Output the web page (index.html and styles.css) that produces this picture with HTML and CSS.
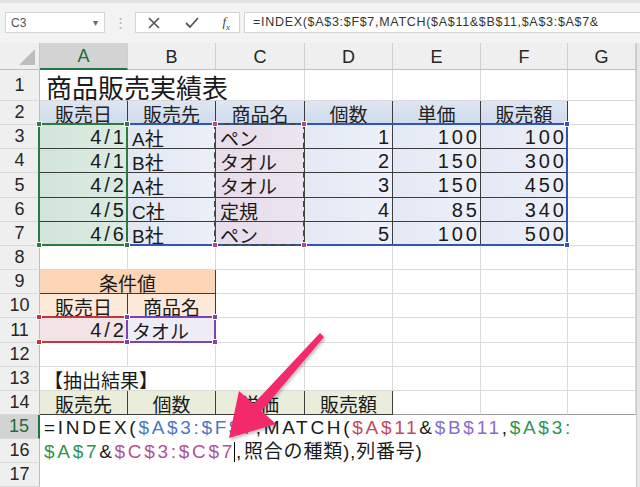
FILE: index.html
```html
<!DOCTYPE html>
<html lang="ja">
<head>
<meta charset="utf-8">
<title>商品販売実績表</title>
<link rel="stylesheet" href="styles.css">
</head>
<body>
<div class="toolbar">
  <div class="namebox"><span>C3</span><span class="caret">▾</span></div>
  <div class="dots">⋮</div>
  <div class="fxbox">
    <svg class="ico" width="14" height="14" viewBox="0 0 14 14"><path d="M2 2 L12 12 M12 2 L2 12" stroke="#555" stroke-width="1.6" fill="none"/></svg>
    <svg class="ico" width="16" height="14" viewBox="0 0 16 14"><path d="M2 7 L6 11 L14 2" stroke="#555" stroke-width="1.8" fill="none"/></svg>
    <span class="fx">f<sub>x</sub></span>
  </div>
  <div class="finput">=INDEX($A$3:$F$7,MATCH($A$11&amp;$B$11,$A$3:$A$7&amp;</div>
</div>

<div class="stage">
  <div class="sheet">
    <div class="scroll"></div>
    <!-- column headers -->
    <div class="corner"><svg width="18" height="18" viewBox="0 0 18 18"><path d="M17 1 L17 17 L1 17 Z" fill="#bdbdbd"/></svg></div>
    <div class="ch sel">A</div><div class="ch">B</div><div class="ch">C</div><div class="ch">D</div><div class="ch">E</div><div class="ch">F</div><div class="ch">G</div>

    <!-- row 1 -->
    <div class="rh">1</div>
    <div class="c title span3">商品販売実績表</div><div class="c"></div><div class="c"></div><div class="c"></div><div class="c"></div>

    <!-- row 2 -->
    <div class="rh">2</div>
    <div class="c t hd ctr">販売日</div><div class="c t hd ctr">販売先</div><div class="c t hd ctr">商品名</div><div class="c t hd ctr">個数</div><div class="c t hd ctr">単価</div><div class="c t hd ctr">販売額</div><div class="c"></div>

    <!-- rows 3-7 -->
    <div class="rh">3</div>
    <div class="c t ga num">4/1</div><div class="c t gb">A社</div><div class="c t gc">ペン</div><div class="c t gd num">1</div><div class="c t gd num">100</div><div class="c t gd num">100</div><div class="c"></div>
    <div class="rh">4</div>
    <div class="c t ga num">4/1</div><div class="c t gb">B社</div><div class="c t gc">タオル</div><div class="c t gd num">2</div><div class="c t gd num">150</div><div class="c t gd num">300</div><div class="c"></div>
    <div class="rh">5</div>
    <div class="c t ga num">4/2</div><div class="c t gb">A社</div><div class="c t gc">タオル</div><div class="c t gd num">3</div><div class="c t gd num">150</div><div class="c t gd num">450</div><div class="c"></div>
    <div class="rh">6</div>
    <div class="c t ga num">4/5</div><div class="c t gb">C社</div><div class="c t gc">定規</div><div class="c t gd num">4</div><div class="c t gd num">85</div><div class="c t gd num">340</div><div class="c"></div>
    <div class="rh">7</div>
    <div class="c t ga num">4/6</div><div class="c t gb">B社</div><div class="c t gc">ペン</div><div class="c t gd num">5</div><div class="c t gd num">100</div><div class="c t gd num">500</div><div class="c"></div>

    <!-- row 8 -->
    <div class="rh">8</div>
    <div class="c"></div><div class="c"></div><div class="c"></div><div class="c"></div><div class="c"></div><div class="c"></div><div class="c"></div>

    <!-- row 9 -->
    <div class="rh">9</div>
    <div class="c t or ctr span2">条件値</div><div class="c"></div><div class="c"></div><div class="c"></div><div class="c"></div><div class="c"></div>

    <!-- row 10 -->
    <div class="rh">10</div>
    <div class="c t or2 ctr">販売日</div><div class="c t or2 ctr">商品名</div><div class="c"></div><div class="c"></div><div class="c"></div><div class="c"></div><div class="c"></div>

    <!-- row 11 -->
    <div class="rh">11</div>
    <div class="c t pk num">4/2</div><div class="c t lv">タオル</div><div class="c"></div><div class="c"></div><div class="c"></div><div class="c"></div><div class="c"></div>

    <!-- row 12 -->
    <div class="rh">12</div>
    <div class="c"></div><div class="c"></div><div class="c"></div><div class="c"></div><div class="c"></div><div class="c"></div><div class="c"></div>

    <!-- row 13 -->
    <div class="rh">13</div>
    <div class="c span2 sub">【抽出結果】</div><div class="c"></div><div class="c"></div><div class="c"></div><div class="c"></div><div class="c"></div>

    <!-- row 14 -->
    <div class="rh">14</div>
    <div class="c t gr ctr">販売先</div><div class="c t gr ctr">個数</div><div class="c t gr ctr">単価</div><div class="c t gr ctr">販売額</div><div class="c r14"></div><div class="c r14"></div><div class="c r14"></div>

    <!-- rows 15-17 : cell in edit mode -->
    <div class="rh act">15</div>
    <div class="edit">=INDEX(<span class="fb">$A$3:$F$7</span>,MATCH(<span class="fr">$A$11</span>&amp;<span class="fp">$B$11</span>,<span class="fg">$A$3:</span><br><span class="fg">$A$7</span>&amp;<span class="fm">$C$3:$C$7</span><span class="cursor"></span>,<span class="jp">照合の種類),列番号)</span></div>
    <div class="rh">16</div>
    <div class="rh">17</div>
  </div>

  <div class="marks">
    <div class="box blue"><i class="h tr"></i><i class="h br"></i></div>
    <div class="box green"><i class="h tl"></i><i class="h tr"></i><i class="h bl"></i><i class="h br"></i></div>
    <div class="box dash"><i class="h tl"></i><i class="h tr"></i><i class="h bl"></i><i class="h br"></i></div>
    <div class="box red"><i class="h tl"></i><i class="h bl"></i></div>
    <div class="box purple"><i class="h tl"></i><i class="h tr"></i><i class="h bl"></i><i class="h br"></i></div>
  </div>

  <svg class="arrow" width="640" height="444" viewBox="0 0 640 444">
    <defs>
      <filter id="sh" x="-20%" y="-20%" width="140%" height="140%">
        <feDropShadow dx="1.5" dy="2" stdDeviation="1.5" flood-color="#000" flood-opacity="0.25"/>
      </filter>
    </defs>
    <g filter="url(#sh)" fill="#f2296c">
      <polygon points="324,294 320,290 253,361.5 261.5,368"/>
      <polygon points="229,395 239,348 276,381"/>
    </g>
  </svg>
</div>
</body>
</html>
```

FILE: styles.css
```css
* { box-sizing: border-box; }
html, body { margin: 0; padding: 0; }
body {
  width: 640px;
  height: 487px;
  overflow: hidden;
  background: #ffffff;
  font-family: "Liberation Sans", "Noto Sans CJK JP", sans-serif;
  color: #1a1a1a;
}

/* ---------- formula bar ---------- */
.toolbar {
  height: 43px;
  background: #f3f3f3;
  border-top: 3px solid #e3e3e3;
  display: flex;
  align-items: flex-start;
  padding: 9px 0 0 5px;
}
.namebox {
  width: 100px;
  height: 21px;
  background: #fff;
  border: 1px solid #d4d4d4;
  display: flex;
  align-items: center;
  justify-content: space-between;
  padding: 0 6px 0 5px;
  font-size: 12px;
  color: #555;
}
.caret { font-size: 10px; color: #666; }
.dots {
  width: 30px;
  height: 21px;
  display: flex;
  align-items: center;
  justify-content: center;
  color: #b0b0b0;
  font-size: 13px;
}
.fxbox {
  width: 105px;
  height: 21px;
  background: #fff;
  border: 1px solid #d4d4d4;
  display: flex;
  align-items: center;
  justify-content: space-between;
  padding: 0 9px 0 11px;
}
.fx {
  font-family: "Liberation Serif", serif;
  font-style: italic;
  font-size: 13px;
  color: #444;
}
.fx sub { font-size: 9px; }
.finput {
  flex: 1;
  height: 21px;
  margin-left: 4px;
  background: #fff;
  border: 1px solid #d4d4d4;
  border-right: none;
  padding-left: 8px;
  font-size: 12.5px;
  line-height: 19px;
  letter-spacing: 0.7px;
  color: #333;
  white-space: nowrap;
  overflow: hidden;
}

/* ---------- sheet ---------- */
.stage { display: grid; }
.stage > * { grid-area: 1 / 1; }

.sheet, .marks {
  display: grid;
  grid-template-columns: 40px 88px 88px 89px 88px 88px 87px 68px 4px;
  grid-template-rows: 27px 31px 24px 24px 24px 25px 24px 24px 24px 24px 24px 25px 24px 24px 24px 24px 24px 24px;
  width: 640px;
  height: 444px;
}
.marks { pointer-events: none; }

.scroll {
  grid-column: 9;
  grid-row: 1 / -1;
  background: #e6e6e6;
  border-left: 1px solid #c9c9c9;
}

.corner {
  background: #efefef;
  border-right: 1px solid #c6c6c6;
  border-bottom: 1px solid #bdbdbd;
  display: flex;
  align-items: flex-end;
  justify-content: flex-end;
  padding: 0 3px 3px 0;
}
.ch {
  background: #efefef;
  border-right: 1px solid #cfcfcf;
  border-bottom: 1px solid #bdbdbd;
  display: flex;
  align-items: center;
  justify-content: center;
  font-size: 18px;
  color: #262626;
  padding-top: 2px;
}
.ch.sel {
  background: #d3d3d3;
  color: #1e6b3e;
  border-bottom: 2px solid #217346;
}
.rh {
  background: #efefef;
  border-right: 1px solid #bdbdbd;
  border-bottom: 1px solid #d9d9d9;
  display: flex;
  align-items: center;
  justify-content: center;
  font-size: 18px;
  color: #262626;
}
.rh.act {
  background: #d3d3d3;
  color: #1e6b3e;
  border-right: 2px solid #217346;
}

.c {
  border-right: 1px solid #dadada;
  border-bottom: 1px solid #dadada;
  display: flex;
  align-items: center;
  padding: 1px 3px 0 4px;
  font-size: 19px;
  white-space: nowrap;
  min-width: 0;
}
.span2 { grid-column: span 2; }
.span3 { grid-column: span 3; }
.ctr { justify-content: center; padding-left: 0; padding-right: 0; }
.num { justify-content: flex-end; letter-spacing: 3px; padding-right: 0; font-size: 20px; }

.title { font-size: 26px; padding-left: 6px; padding-top: 2px; background: #fff; }
.sub { padding-left: 4px; }

.t { border-right-color: #3c3c3c; border-bottom-color: #3c3c3c; }
.hd { background: linear-gradient(#dde6f2, #cfdbec); color: #222; }
.ga { background: linear-gradient(90deg, #d3e5da, #dcebe2); }
.gb { background: linear-gradient(90deg, #e2e7f3, #eceff7); }
.gc { background: linear-gradient(90deg, #e6dcea, #ece4ef); }
.gd { background: linear-gradient(90deg, #e4e9f4, #edf0f8); }

.or { background: #fbd5b5; }
.or2 { background: #fde9d9; }
.pk { background: #f3e3e6; }
.lv { background: #eeecf7; }
.gr { background: #e9edda; }
.r14 { border-bottom-color: #9a9a9a; }

.edit {
  grid-column: span 7;
  grid-row: span 3;
  background: #fff;
  font-size: 19px;
  line-height: 24px;
  padding: 1px 0 0 4px;
  letter-spacing: 2.7px;
  white-space: nowrap;
  overflow: hidden;
  color: #1a1a1a;
}
.jp { letter-spacing: 0.8px; }
.fb { color: #4a76c6; }
.fr { color: #c5485e; }
.fp { color: #8a6ccb; }
.fg { color: #2f9350; }
.fm { color: #b24f96; }
.cursor {
  display: inline-block;
  width: 1px;
  height: 20px;
  background: #000;
  vertical-align: -4px;
  margin: 0 1px 0 -1px;
}

/* ---------- range highlight boxes ---------- */
.box {
  position: relative;
  margin: -2px 0 0 -2px;
  border: 2px solid transparent;
}
.blue { grid-row: 4 / 9; grid-column: 2 / 8; border-color: #2f55b5; }
.green { grid-row: 4 / 9; grid-column: 2 / 3; border-color: #2d7a3e; }
.dash { grid-row: 4 / 9; grid-column: 4 / 5; border: 2px dashed #3e4d40; }
.red { grid-row: 12 / 13; grid-column: 2 / 3; border-color: #c1363f; border-left-color: transparent; }
.purple { grid-row: 12 / 13; grid-column: 3 / 4; border-color: #7a45b0; }

.h {
  position: absolute;
  width: 6px;
  height: 6px;
  border: 1px solid #fff;
}
.h.tl { left: -4px; top: -4px; }
.h.tr { right: -4px; top: -4px; }
.h.bl { left: -4px; bottom: -4px; }
.h.br { right: -4px; bottom: -4px; }
.blue .h { background: #2f55b5; }
.green .h { background: #2d7a3e; }
.dash .h { background: #b04a8e; }
.red .h { background: #c1363f; }
.purple .h { background: #7a45b0; }

.arrow { pointer-events: none; }
```
